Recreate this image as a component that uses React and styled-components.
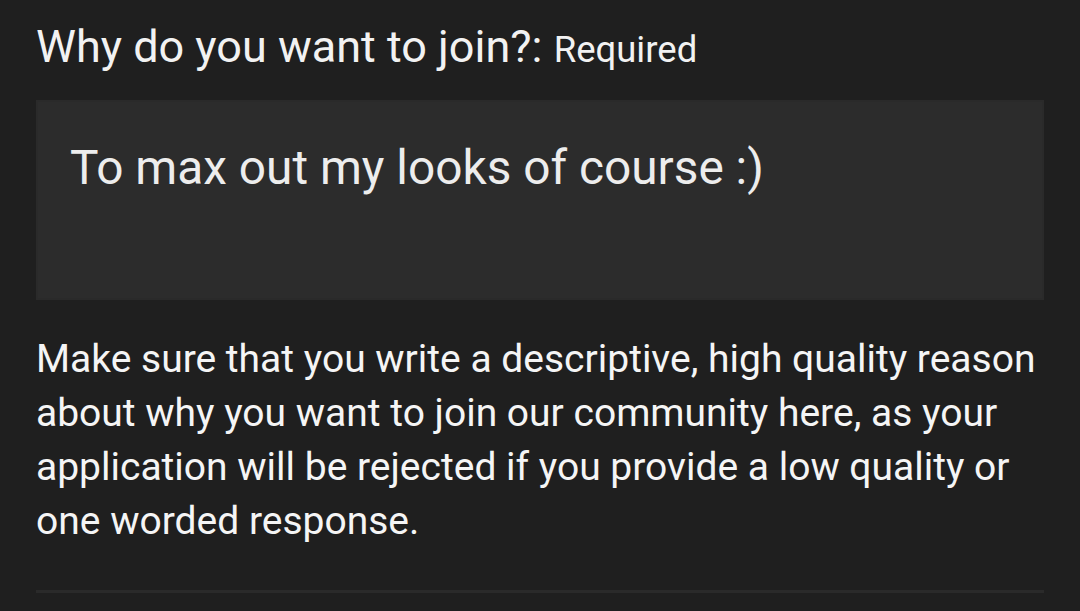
import React from 'react';
import styled, { createGlobalStyle } from 'styled-components';

const GlobalStyle = createGlobalStyle`
  html, body {
    margin: 0;
    padding: 0;
    background: #1f1f1f;
  }
  body {
    font-family: Roboto, "Noto Sans", sans-serif;
    -webkit-font-smoothing: antialiased;
  }
`;

const Page = styled.div`
  width: 1080px;
  height: 611px;
  box-sizing: border-box;
  padding: 21px 36px 0 36px;
  background: #1f1f1f;
  overflow: hidden;
`;

const Title = styled.h2`
  margin: 0;
  font-weight: 400;
  font-size: 45px;
  line-height: 52px;
  color: #f2f2f2;
`;

const Required = styled.span`
  font-size: 36.5px;
  line-height: 1;
  color: #f2f2f2;
`;

const AnswerBox = styled.div`
  margin-top: 27px;
  height: 200px;
  box-sizing: border-box;
  padding: 38px 32px 0 32px;
  background: #2c2c2c;
  border: 2px solid #2a2a2a;
  font-size: 47.8px;
  line-height: 56px;
  color: #ededed;
`;

const Hint = styled.p`
  margin: 32px 0 0 0;
  font-size: 39px;
  line-height: 54px;
  color: #f5f5f5;
`;

const Divider = styled.hr`
  margin: 42px 0 0 0;
  border: none;
  height: 3px;
  background: #2a2a2a;
`;

export default function App() {
  return (
    <>
      <GlobalStyle />
      <Page>
        <Title>
          Why do you want to join?: <Required>Required</Required>
        </Title>
        <AnswerBox>To max out my looks of course :)</AnswerBox>
        <Hint>
          Make sure that you write a descriptive, high quality reason about why you want to join our
          community here, as your application will be rejected if you provide a low quality or one
          worded response.
        </Hint>
        <Divider />
      </Page>
    </>
  );
}
